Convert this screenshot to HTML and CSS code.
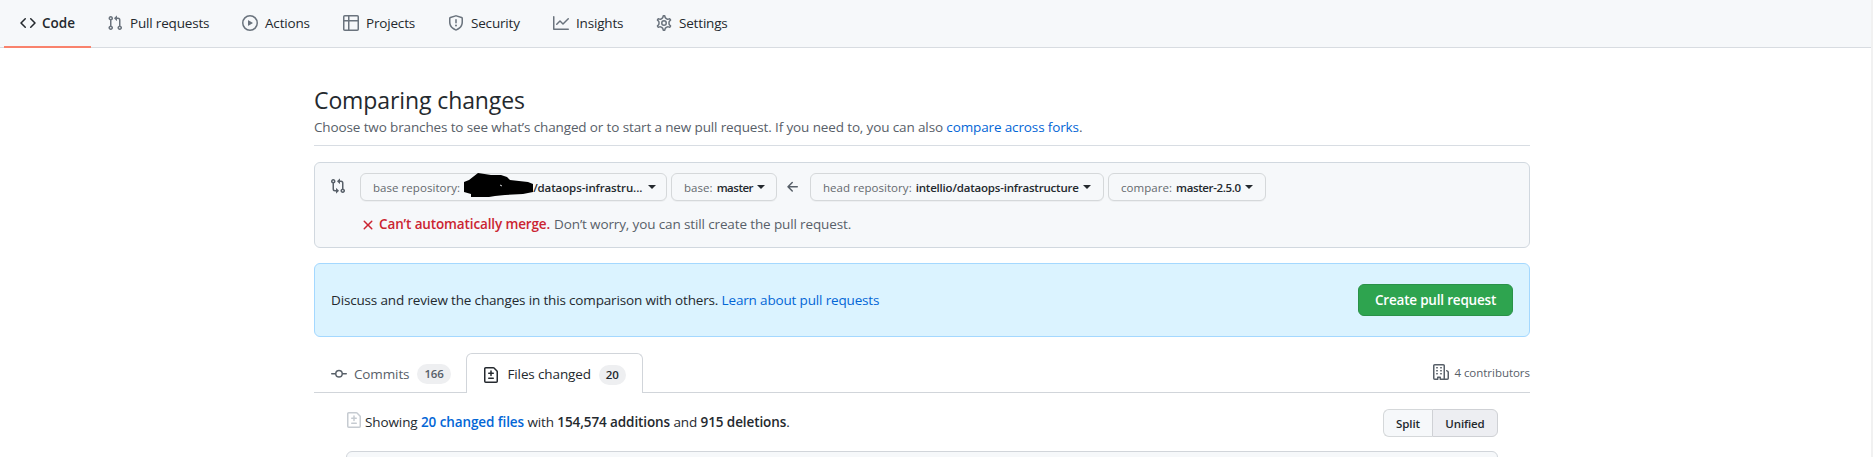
FILE: index.html
```
<!DOCTYPE html>
<html lang="en">
<head>
<meta charset="utf-8">
<title>Comparing changes</title>
<link rel="stylesheet" href="styles.css">
</head>
<body>
<div class="page">
<nav class="nav">
  <a class="nav-item selected code"><svg class="icon" viewBox="0 0 16 16"><path fill-rule="evenodd" d="M4.72 3.22a.75.75 0 011.06 1.06L2.06 8l3.72 3.72a.75.75 0 11-1.06 1.06L.47 8.53a.75.75 0 010-1.06l4.25-4.25zm6.56 0a.75.75 0 10-1.06 1.06L13.94 8l-3.72 3.72a.75.75 0 101.06 1.06l4.25-4.25a.75.75 0 000-1.06l-4.25-4.25z"/></svg><span>Code</span></a>
  <a class="nav-item pulls"><svg class="icon" viewBox="0 0 16 16"><path fill-rule="evenodd" d="M7.177 3.073L9.573.677A.25.25 0 0110 .854v4.792a.25.25 0 01-.427.177L7.177 3.427a.25.25 0 010-.354zM3.75 2.5a.75.75 0 100 1.5.75.75 0 000-1.5zm-2.25.75a2.25 2.25 0 113 2.122v5.256a2.251 2.251 0 11-1.5 0V5.372A2.25 2.25 0 011.5 3.25zM11 2.5h-1V4h1a1 1 0 011 1v5.628a2.251 2.251 0 101.5 0V5A2.5 2.5 0 0011 2.5zm1 10.25a.75.75 0 111.5 0 .75.75 0 01-1.5 0zM3.75 12a.75.75 0 100 1.5.75.75 0 000-1.5z"/></svg><span>Pull requests</span></a>
  <a class="nav-item actions"><svg class="icon" viewBox="0 0 16 16"><path fill-rule="evenodd" d="M1.5 8a6.5 6.5 0 1113 0 6.5 6.5 0 01-13 0zM8 0a8 8 0 100 16A8 8 0 008 0zM6.379 5.227A.25.25 0 006 5.442v5.117a.25.25 0 00.379.214l4.264-2.559a.25.25 0 000-.428L6.379 5.227z"/></svg><span>Actions</span></a>
  <a class="nav-item projects"><svg class="icon" viewBox="0 0 16 16"><path fill-rule="evenodd" d="M1.75 0A1.75 1.75 0 000 1.75v12.5C0 15.216.784 16 1.75 16h12.5A1.75 1.75 0 0016 14.25V1.75A1.75 1.75 0 0014.25 0H1.75zM1.5 1.75a.25.25 0 01.25-.25H5V5H1.5V1.75zM6.500 1.5h7.750a.25.25 0 01.25.25V5h-8V1.5zM5 6.500H1.500v7.750c0 .138.112.25.25.25H5v-8zm1.500 8v-8h8v7.750a.25.25 0 01-.25.25H6.500z"/></svg><span>Projects</span></a>
  <a class="nav-item security"><svg class="icon" viewBox="0 0 16 16"><path fill-rule="evenodd" d="M7.467.133a1.75 1.75 0 011.066 0l5.25 1.68A1.75 1.75 0 0115 3.480V7c0 1.566-.32 3.182-1.303 4.682-.983 1.498-2.585 2.813-5.032 3.855a1.700 1.700 0 01-1.330 0c-2.447-1.042-4.049-2.357-5.032-3.855C1.320 10.182 1 8.566 1 7V3.480a1.750 1.750 0 011.217-1.667l5.250-1.680zm.610 1.429a.25.25 0 00-.153 0l-5.250 1.680a.25.25 0 00-.174.238V7c0 1.358.275 2.666 1.057 3.860.784 1.194 2.121 2.340 4.366 3.297a.200.200 0 00.154 0c2.245-.956 3.582-2.104 4.366-3.298C13.225 9.666 13.500 8.360 13.500 7V3.480a.25.25 0 00-.174-.237l-5.250-1.680zM9 10.500a1 1 0 11-2 0 1 1 0 012 0zm-.25-5.750a.75.75 0 10-1.500 0v3a.75.75 0 001.500 0v-3z"/></svg><span>Security</span></a>
  <a class="nav-item insights"><svg class="icon" viewBox="0 0 16 16"><path fill-rule="evenodd" d="M1.5 1.75a.75.75 0 00-1.5 0v12.500c0 .414.336.75.75.75h14.500a.75.75 0 000-1.500H1.500V1.750zm14.280 2.530a.75.75 0 00-1.060-1.060L10 7.940 7.530 5.470a.75.75 0 00-1.060 0L3.220 8.720a.75.75 0 001.060 1.060L7 7.060l2.470 2.470a.75.75 0 001.060 0l5.250-5.250z"/></svg><span>Insights</span></a>
  <a class="nav-item settings"><svg class="icon" viewBox="0 0 16 16"><path fill="none" stroke="currentColor" stroke-width="1.350" transform="translate(-.88 -.88) scale(1.11)" d="M7.429 1.525a6.593 6.593 0 011.142 0c.036.003.108.036.137.146l.289 1.105c.147.56.55.967.997 1.189.174.086.341.183.501.29.417.278.97.423 1.530.27l1.102-.303c.11-.03.175.016.195.046.219.31.41.641.573.989.014.031.022.11-.059.19l-.815.806c-.411.406-.562.957-.53 1.456a4.588 4.588 0 010 .582c-.032.499.119 1.050.53 1.456l.815.806c.08.08.073.159.059.19a6.494 6.494 0 01-.573.99c-.02.029-.086.074-.195.045l-1.103-.303c-.559-.153-1.112-.008-1.529.27-.16.107-.327.204-.5.29-.449.222-.851.628-.998 1.189l-.289 1.105c-.029.11-.101.143-.137.146a6.613 6.613 0 01-1.142 0c-.036-.003-.108-.037-.137-.146l-.289-1.105c-.147-.56-.55-.967-.997-1.189a4.502 4.502 0 01-.501-.29c-.417-.278-.97-.423-1.530-.27l-1.102.303c-.11.03-.175-.016-.195-.046a6.492 6.492 0 01-.573-.989c-.014-.031-.022-.11.059-.19l.815-.806c.411-.406.562-.957.53-1.456a4.587 4.587 0 010-.582c.032-.499-.119-1.050-.53-1.456l-.815-.806c-.08-.08-.073-.159-.059-.19a6.440 6.440 0 01.573-.99c.02-.029.086-.075.195-.045l1.103.303c.559.153 1.112.008 1.529-.27.16-.107.327-.204.5-.29.449-.222.851-.628.998-1.189l.289-1.105c.029-.11.101-.143.137-.146z"/><circle cx="8" cy="8" r="2.250" fill="none" stroke="currentColor" stroke-width="1.500"/></svg><span>Settings</span></a>
</nav>

<main class="container">
  <header class="subhead">
    <h1>Comparing changes</h1>
    <p>Choose two branches to see what’s changed or to start a new pull request. If you need to, you can also <a>compare across forks</a>.</p>
  </header>

  <section class="range">
    <svg class="icon compare" viewBox="0 0 16 16"><path fill-rule="evenodd" d="M9.573.677L7.177 3.073a.25.25 0 000 .354l2.396 2.396A.25.25 0 0010 5.646V4h1a1 1 0 011 1v5.628a2.251 2.251 0 101.500 0V5A2.500 2.500 0 0011 2.500h-1V.854a.25.25 0 00-.427-.177zM6 12v-1.646a.25.25 0 01.427-.177l2.396 2.396a.25.25 0 010 .354l-2.396 2.396A.25.25 0 016 15.146V13.500H5A2.500 2.500 0 012.500 11V5.372a2.250 2.250 0 111.500 0V11a1 1 0 001 1h1zM4 3.250a.75.75 0 10-1.500 0 .75.75 0 001.500 0zM12.750 12a.75.75 0 100 1.500.75.75 0 000-1.500z"/></svg>
    <div class="range-body">
      <div class="range-row">
        <button class="btn base-repo"><span>base repository:</span><svg class="redaction" viewBox="0 0 69 24"><path d="M0 9l5-2L14 0l13 2 10 0 6 2 3 3 18 2 5 2v8l-10 2-18 1-10 1-6 1H7v-3l-7-2z"/><path class="speck" d="M36 12l2 1"/></svg><b>/dataops-infrastru...</b><i class="caret"></i></button>
        <button class="btn base"><span>base:</span><b>master</b><i class="caret"></i></button>
        <svg class="icon arrow" viewBox="0 0 16 16"><path fill-rule="evenodd" d="M7.780 12.530a.75.75 0 01-1.060 0L2.470 8.280a.75.75 0 010-1.060l4.250-4.250a.75.75 0 011.060 1.060L4.810 7h7.440a.75.75 0 010 1.500H4.810l2.970 2.970a.75.75 0 010 1.060z"/></svg>
        <button class="btn head-repo"><span>head repository:</span><b>intellio/dataops-infrastructure</b><i class="caret"></i></button>
        <button class="btn head"><span>compare:</span><b>master-2.5.0</b><i class="caret"></i></button>
      </div>
      <p class="merge"><svg class="icon x" viewBox="0 0 16 16"><path fill-rule="evenodd" d="M3.720 3.720a.75.75 0 011.060 0L8 6.940l3.220-3.220a.75.75 0 111.060 1.060L9.060 8l3.220 3.220a.75.75 0 11-1.060 1.060L8 9.060l-3.220 3.220a.75.75 0 01-1.060-1.060L6.940 8 3.720 4.780a.75.75 0 010-1.060z"/></svg><b>Can’t automatically merge.</b><span>Don’t worry, you can still create the pull request.</span></p>
    </div>
  </section>

  <section class="discuss">
    <p>Discuss and review the changes in this comparison with others. <a>Learn about pull requests</a></p>
    <button class="create"><span>Create pull request</span></button>
  </section>

  <div class="tabs">
    <a class="tab commits"><svg class="icon" viewBox="0 0 16 16"><path fill-rule="evenodd" d="M10.500 7.750a2.500 2.500 0 11-5 0 2.500 2.500 0 015 0zm1.430.75a4.002 4.002 0 01-7.860 0H.750a.75.75 0 110-1.500h3.320a4.001 4.001 0 017.860 0h3.320a.75.75 0 110 1.500h-3.320z"/></svg><span class="label">Commits</span><span class="count">166</span></a>
    <a class="tab files active"><svg class="icon" viewBox="0 0 16 16"><path fill-rule="evenodd" d="M2.750 1.500a.25.25 0 00-.250.250v12.500c0 .138.112.250.250.250h10.500a.25.25 0 00.250-.250V4.664a.25.25 0 00-.073-.177l-2.914-2.914a.25.25 0 00-.177-.073H2.750zM1 1.750C1 .784 1.784 0 2.750 0h7.586c.464 0 .909.184 1.237.513l2.914 2.914c.329.328.513.773.513 1.237v9.586A1.750 1.750 0 0113.250 16H2.750A1.750 1.750 0 011 14.250V1.750zm7 1.500a.75.75 0 01.750.750v1.500h1.500a.75.75 0 010 1.500h-1.500v1.500a.75.75 0 01-1.500 0V7h-1.500a.75.75 0 010-1.500h1.500V4A.75.75 0 018 3.250zm-3 8a.75.75 0 01.750-.750h4.500a.75.75 0 010 1.500h-4.500a.75.75 0 01-.750-.750z"/></svg><span class="label">Files changed</span><span class="count">20</span></a>
    <div class="contributors"><svg class="icon" viewBox="0 0 16 16"><path fill-rule="evenodd" d="M1.500 14.250c0 .138.112.250.250.250H4v-1.250a.75.75 0 01.750-.750h2.500a.75.75 0 01.750.750v1.250h2.250a.25.25 0 00.250-.250V1.750a.25.25 0 00-.250-.250h-8.500a.25.25 0 00-.250.250v12.500zM1.750 16A1.750 1.750 0 010 14.250V1.750C0 .784.784 0 1.750 0h8.500C11.216 0 12 .784 12 1.750v12.500c0 .085-.006.168-.018.250h2.268a.25.25 0 00.250-.250V8.285a.25.25 0 00-.111-.208l-1.055-.703a.75.75 0 11.832-1.248l1.055.703c.487.325.779.871.779 1.456v5.965A1.750 1.750 0 0114.250 16h-3.500a.75.75 0 01-.197-.026c-.099.017-.200.026-.303.026h-3a.75.75 0 01-.750-.750V14h-1v1.250a.75.75 0 01-.750.750h-3zM3 3.750A.75.75 0 013.750 3h.5a.75.75 0 010 1.500h-.5A.75.75 0 013 3.750zM3.750 6a.75.75 0 000 1.500h.5a.75.75 0 000-1.500h-.5zM3 9.750A.75.75 0 013.750 9h.5a.75.75 0 010 1.500h-.5A.75.75 0 013 9.750zM7.750 9a.75.75 0 000 1.500h.5a.75.75 0 000-1.500h-.5zM7 6.750A.75.75 0 017.750 6h.5a.75.75 0 010 1.500h-.5A.75.75 0 017 6.750zM7.750 3a.75.75 0 000 1.500h.5a.75.75 0 000-1.500h-.5z"/></svg><span>4 contributors</span></div>
  </div>

  <div class="files-area">
    <div class="toolbar">
      <svg class="icon faded" viewBox="0 0 16 16"><path fill-rule="evenodd" d="M2.750 1.500a.25.25 0 00-.250.250v12.500c0 .138.112.250.250.250h10.500a.25.25 0 00.250-.250V4.664a.25.25 0 00-.073-.177l-2.914-2.914a.25.25 0 00-.177-.073H2.750zM1 1.750C1 .784 1.784 0 2.750 0h7.586c.464 0 .909.184 1.237.513l2.914 2.914c.329.328.513.773.513 1.237v9.586A1.750 1.750 0 0113.250 16H2.750A1.750 1.750 0 011 14.250V1.750zm7 1.500a.75.75 0 01.750.750v1.500h1.500a.75.75 0 010 1.500h-1.500v1.500a.75.75 0 01-1.500 0V7h-1.500a.75.75 0 010-1.500h1.500V4A.75.75 0 018 3.250zm-3 8a.75.75 0 01.750-.750h4.500a.75.75 0 010 1.500h-4.500a.75.75 0 01-.750-.750z"/></svg>
      <p class="stats">Showing <a>20 changed files</a> with <b>154,574 additions</b> and <b>915 deletions</b>.</p>
      <div class="toggle"><button class="split">Split</button><button class="unified">Unified</button></div>
    </div>
    <div class="file-box"></div>
  </div>
</main>
</div>
</body>
</html>
```
FILE: styles.css
```
* { box-sizing: border-box; }
body { margin: 0; background: #fff; color: #24292e; font: 13.5px/21px "Open Sans", "Noto Sans", sans-serif; letter-spacing: -0.13px; overflow: hidden; }
h1, p { margin: 0; font-weight: 400; }
b { font-weight: 600; }
a { color: #0366d6; text-decoration: none; white-space: nowrap; }
button { font-family: inherit; letter-spacing: inherit; margin: 0; padding: 0; white-space: nowrap; }
.page { height: 457px; overflow: hidden; border-right: 2px solid #f1f1f1; }
.icon { width: 16px; height: 16px; flex: none; fill: currentColor; }

.nav { display: flex; height: 48px; padding-left: 4px; background: #f6f8fa; border-bottom: 1px solid #d8dce1; }
.nav-item { display: flex; align-items: center; height: 48px; padding: 0 0 2px 16px; gap: 7px; color: #24292e; letter-spacing: -0.18px; }
.nav-item .icon { color: #6a737d; }
.nav-item.selected { font-weight: 600; padding-bottom: 0; border-bottom: 2px solid #f9826c; gap: 6px; letter-spacing: 0; }
.nav-item.selected .icon { color: #24292e; }
.code { width: 87px; }
.pulls { width: 135px; }
.actions { width: 101px; }
.projects { width: 105px; }
.security { width: 105px; }
.insights { width: 103px; }

.container { width: 1216px; margin-left: 314px; }
.subhead { height: 98px; padding-top: 34px; border-bottom: 1px solid #d8dde3; }
.subhead h1 { font-size: 23px; line-height: 36px; letter-spacing: -0.1px; }
.subhead p { margin-top: -1px; color: #586069; line-height: 21px; white-space: nowrap; }

.range { display: flex; height: 86px; margin-top: 16px; padding: 10px 16px; background: #f6f8fa; border: 1px solid #d1d8df; border-radius: 6px; }
.compare { margin: 5px 1px 0 -1px; color: #586069; }
.range-body { margin-left: 13px; }
.range-row { display: flex; align-items: center; }
.btn { display: flex; align-items: center; height: 28px; padding: 0 12px; background: #f6f8fa; border: 1px solid #d5d8da; border-radius: 6px; box-shadow: 0 1px 0 rgba(27,31,35,.04); font-size: 11.5px; color: #24292e; letter-spacing: -0.2px; }
.btn span { color: #65696e; margin-right: 4px; letter-spacing: 0.05px; }
.caret { margin-left: 4px; border: 4px solid transparent; border-top-color: currentColor; border-bottom: 0; }
.base-repo { width: 307px; letter-spacing: -0.1px; }
.base-repo .caret { margin-left: 6px; }
.base { width: 106px; margin-left: 4px; letter-spacing: -0.5px; }
.arrow { margin: 0 9px 0 8px; color: #586069; }
.head-repo { width: 294px; }
.head { width: 158px; margin-left: 4px; letter-spacing: -0.38px; }
.redaction { width: 69px; height: 24px; margin: -5px 0 0 0; flex: none; fill: #000; }
.speck { stroke: #d8dadc; stroke-width: 1; }
.merge { display: flex; align-items: center; margin-top: 13px; white-space: nowrap; color: #586069; }
.merge b { color: #cb2431; margin-right: 4px; }
.x { color: #cb2431; margin-right: 3px; }

.discuss { display: flex; align-items: center; justify-content: space-between; height: 74px; margin-top: 15px; padding: 0 16px; background: #dbf3ff; border: 1px solid #a4d8ff; border-radius: 6px; white-space: nowrap; letter-spacing: -0.16px; }
.create { width: 155px; height: 32px; color: #fff; background: #2ea44f; border: 1px solid #2a9148; border-radius: 6px; font-size: 13.5px; font-weight: 600; letter-spacing: -0.2px; }

.tabs { display: flex; height: 56px; padding-top: 16px; border-bottom: 1px solid #d1d5da; }
.tab { display: flex; align-items: center; height: 40px; }
.commits { width: 152px; padding: 2px 0 0 17px; color: #586069; }
.tab .label { margin-left: 7px; }
.count { min-width: 27px; height: 20px; margin-left: 8px; padding: 0 7px; border-radius: 10px; background: #eeeff1; font-size: 11.5px; line-height: 20px; font-weight: 600; text-align: center; }
.files { width: 177px; padding: 2px 0 0 16px; background: #fff; border: 1px solid #d1d5da; border-bottom: 0; border-radius: 6px 6px 0 0; color: #24292e; }
.files .label { margin-left: 8.5px; }
.contributors { display: flex; align-items: center; gap: 5px; height: 20px; margin: 9px 0 0 auto; color: #586069; font-size: 11.5px; white-space: nowrap; letter-spacing: -0.03px; }

.files-area { padding: 16px 32px 0; }
.toolbar { display: flex; height: 28px; }
.faded { margin: 3px 0 0; color: #c6cbd1; }
.stats { margin: 3px 0 0 3px; white-space: nowrap; letter-spacing: -0.1px; }
.stats a { font-weight: 600; }
.toggle { display: flex; margin-left: auto; }
.toggle button { height: 28px; font-size: 11.5px; font-weight: 600; color: #24292e; border: 1px solid #d5d8da; }
.toggle .split { width: 49px; background: #f6f8fa; border-right: 0; border-radius: 6px 0 0 6px; }
.toggle .unified { width: 66px; background: #edeef2; border-color: #cfd1d5; border-radius: 0 6px 6px 0; }
.file-box { height: 40px; margin-top: 14px; background: #f6f8fa; border: 1px solid #d1d5da; border-radius: 6px; }
```
